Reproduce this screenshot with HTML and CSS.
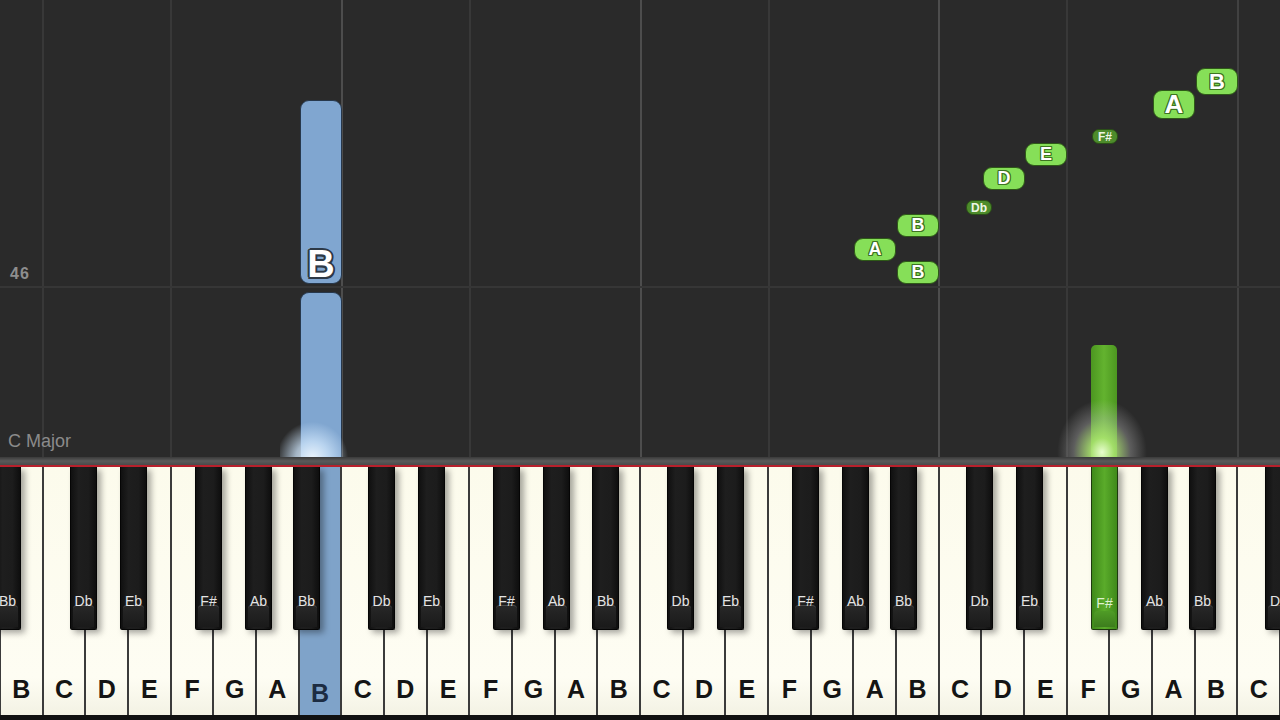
FILE: index.html
```html
<!DOCTYPE html>
<html>
<head>
<meta charset="utf-8">
<link rel="stylesheet" href="styles.css">
</head>
<body>
<div class="app">
  <div class="roll">
    <div class="vline dim" style="left:42px"></div>
    <div class="vline dim" style="left:170px"></div>
    <div class="vline bright" style="left:341px"></div>
    <div class="vline dim" style="left:469px"></div>
    <div class="vline bright" style="left:640px"></div>
    <div class="vline dim" style="left:768px"></div>
    <div class="vline bright" style="left:938px"></div>
    <div class="vline dim" style="left:1066px"></div>
    <div class="vline mid" style="left:1237px"></div>
    <div class="hline" style="top:286px"></div>
    <div class="measure" style="top:265px">46</div>
    <div class="key-name">C Major</div>

    <div class="blue-note top-part" style="top:100px;height:184px">
      <span class="blue-label">B</span>
    </div>
    <div class="blue-note low-part" style="top:292px;height:165px"></div>
    <div class="glow blue-glow"></div>

    <div class="green-note" style="top:345px;height:112px"></div>
    <div class="glow green-glow"></div>

    <div class="tag" style="left:854px;top:238px">A</div>
    <div class="tag" style="left:897px;top:214px">B</div>
    <div class="tag" style="left:897px;top:261px">B</div>
    <div class="tag small" style="left:966px;top:200px">Db</div>
    <div class="tag" style="left:983px;top:167px">D</div>
    <div class="tag" style="left:1025px;top:143px">E</div>
    <div class="tag small" style="left:1092px;top:129px">F#</div>
    <div class="tag big" style="left:1153px;top:90px">A</div>
    <div class="tag top" style="left:1196px;top:68px">B</div>
  </div>
  <div class="bar"></div>
  <div class="redline"></div>
  <div class="keyboard">
    <div class="whites">
      <div class="white"><span>B</span></div>
      <div class="white"><span>C</span></div>
      <div class="white"><span>D</span></div>
      <div class="white"><span>E</span></div>
      <div class="white"><span>F</span></div>
      <div class="white"><span>G</span></div>
      <div class="white"><span>A</span></div>
      <div class="white blue"><span>B</span></div>
      <div class="white"><span>C</span></div>
      <div class="white"><span>D</span></div>
      <div class="white"><span>E</span></div>
      <div class="white"><span>F</span></div>
      <div class="white"><span>G</span></div>
      <div class="white"><span>A</span></div>
      <div class="white"><span>B</span></div>
      <div class="white"><span>C</span></div>
      <div class="white"><span>D</span></div>
      <div class="white"><span>E</span></div>
      <div class="white"><span>F</span></div>
      <div class="white"><span>G</span></div>
      <div class="white"><span>A</span></div>
      <div class="white"><span>B</span></div>
      <div class="white"><span>C</span></div>
      <div class="white"><span>D</span></div>
      <div class="white"><span>E</span></div>
      <div class="white"><span>F</span></div>
      <div class="white"><span>G</span></div>
      <div class="white"><span>A</span></div>
      <div class="white"><span>B</span></div>
      <div class="white"><span>C</span></div>
    </div>
    <div class="black" style="left:-6px"><span>Bb</span></div>
    <div class="black" style="left:70px"><span>Db</span></div>
    <div class="black" style="left:120px"><span>Eb</span></div>
    <div class="black" style="left:195px"><span>F#</span></div>
    <div class="black" style="left:245px"><span>Ab</span></div>
    <div class="black" style="left:293px"><span>Bb</span></div>
    <div class="black" style="left:368px"><span>Db</span></div>
    <div class="black" style="left:418px"><span>Eb</span></div>
    <div class="black" style="left:493px"><span>F#</span></div>
    <div class="black" style="left:543px"><span>Ab</span></div>
    <div class="black" style="left:592px"><span>Bb</span></div>
    <div class="black" style="left:667px"><span>Db</span></div>
    <div class="black" style="left:717px"><span>Eb</span></div>
    <div class="black" style="left:792px"><span>F#</span></div>
    <div class="black" style="left:842px"><span>Ab</span></div>
    <div class="black" style="left:890px"><span>Bb</span></div>
    <div class="black" style="left:966px"><span>Db</span></div>
    <div class="black" style="left:1016px"><span>Eb</span></div>
    <div class="black green" style="left:1091px"><span>F#</span></div>
    <div class="black" style="left:1141px"><span>Ab</span></div>
    <div class="black" style="left:1189px"><span>Bb</span></div>
    <div class="black edge" style="left:1265px"><span>Db</span></div>
  </div>
  <div class="bottom"></div>
</div>
</body>
</html>
```

FILE: styles.css
```css
* { box-sizing: border-box; }
html, body {
  margin: 0;
  padding: 0;
  background: #2b2b2b;
  font-family: "Liberation Sans", Arial, sans-serif;
}
.app {
  width: 1280px;
  height: 720px;
  overflow: hidden;
  display: flex;
  flex-direction: column;
}
.roll {
  position: relative;
  height: 457px;
  flex: none;
  background: #2a2a2a;
  overflow: hidden;
}
.vline {
  position: absolute;
  top: 0;
  bottom: 0;
  width: 2px;
}
.vline.dim { background: #383838; }
.vline.mid { background: #414141; }
.vline.bright { background: #4d4d4d; }
.hline {
  position: absolute;
  left: 0;
  right: 0;
  height: 2px;
  background: #363636;
}
.measure {
  position: absolute;
  left: 10px;
  font-size: 16px;
  font-weight: bold;
  color: #8e8e8e;
  letter-spacing: 1px;
}
.key-name {
  position: absolute;
  left: 8px;
  top: 431px;
  font-size: 18px;
  color: #8b8b8b;
}
.blue-note {
  position: absolute;
  left: 300px;
  width: 42px;
  background: #80a6d0;
  border: 1px solid #27384c;
  display: flex;
  align-items: flex-end;
  justify-content: center;
}
.blue-note.top-part { border-radius: 9px; }
.blue-note.low-part { border-radius: 9px 9px 0 0; border-bottom: none; }
.blue-label {
  font-size: 38px;
  font-weight: bold;
  color: #ffffff;
  line-height: 36px;
  margin-bottom: 1px;
  text-shadow: 2px 0 #2d3946, -2px 0 #2d3946, 0 2px #2d3946, 0 -2px #2d3946,
    1.5px 1.5px #2d3946, -1.5px 1.5px #2d3946, 1.5px -1.5px #2d3946, -1.5px -1.5px #2d3946;
}
.green-note {
  position: absolute;
  left: 1091px;
  width: 26px;
  border-radius: 5px 5px 0 0;
  background: linear-gradient(90deg, #4c9620, #63b32f 50%, #4c9620);
}
.glow {
  position: absolute;
  pointer-events: none;
}
.blue-glow {
  left: 280px;
  top: 418px;
  width: 72px;
  height: 46px;
  background: radial-gradient(ellipse at 45% 88%, rgba(240,248,255,0.95) 0%, rgba(205,228,250,0.75) 30%, rgba(160,200,240,0.0) 64%);
}
.green-glow {
  left: 1054px;
  top: 396px;
  width: 96px;
  height: 74px;
  background: radial-gradient(ellipse at 50% 76%, rgba(235,255,210,0.98) 0%, rgba(175,232,115,0.85) 18%, rgba(210,210,210,0.3) 42%, rgba(120,120,120,0) 66%);
}
.tag {
  position: absolute;
  width: 42px;
  height: 23px;
  border-radius: 9px;
  background: #86df58;
  border: 1px solid #2e5a17;
  display: flex;
  align-items: center;
  justify-content: center;
  font-size: 18px;
  font-weight: bold;
  color: #ffffff;
  text-shadow: 1px 0 #3d7421, -1px 0 #3d7421, 0 1px #3d7421, 0 -1px #3d7421,
    1px 1px #3d7421, -1px 1px #3d7421, 1px -1px #3d7421, -1px -1px #3d7421;
}
.tag.big {
  height: 29px;
  font-size: 26px;
}
.tag.top {
  height: 27px;
  font-size: 22px;
}
.tag.small {
  width: 26px;
  height: 15px;
  border-radius: 7px;
  background: #4d8c2b;
  border-color: #2a4f17;
  font-size: 12px;
  text-shadow: none;
  color: #eef6e6;
}
.bar {
  height: 8px;
  flex: none;
  background: linear-gradient(#3a3a3a, #5a5a5a 50%, #4a4a4a);
}
.redline {
  height: 2px;
  flex: none;
  background: #b8202c;
}
.keyboard {
  position: relative;
  height: 248px;
  flex: none;
  background: #222;
  overflow: hidden;
}
.whites {
  display: flex;
  height: 100%;
}
.white {
  flex: 1;
  background: linear-gradient(#fcfbec, #fefdf3 85%, #f3f2e4);
  border-left: 1px solid #3b3b3b;
  border-right: 1px solid #3b3b3b;
  display: flex;
  align-items: flex-end;
  justify-content: center;
  padding-bottom: 11px;
}
.white span {
  font-size: 25px;
  font-weight: bold;
  color: #141414;
}
.white.blue {
  background: #7fa3c9;
}
.white.blue span {
  color: #1c2c42;
  margin-bottom: -4px;
}
.black {
  position: absolute;
  top: 0;
  width: 27px;
  height: 163px;
  background: linear-gradient(90deg, #101010, #1e1e1e 30%, #1c1c1c 70%, #0e0e0e);
  border: 1px solid #050505;
  border-top: none;
  border-radius: 0 0 2px 2px;
  box-shadow: 4px 3px 6px rgba(0,0,0,0.35);
  display: flex;
  align-items: flex-end;
  justify-content: center;
  padding-bottom: 20px;
}
.black.edge {
  justify-content: flex-start;
  padding-left: 4px;
}
.black::after {
  content: "";
  position: absolute;
  left: 2px;
  right: 2px;
  bottom: 2px;
  height: 21px;
  border-top: 1px solid #4a4a4a;
  border-radius: 4px 4px 0 0;
  background: linear-gradient(#272727, #1a1a1a);
}
.black span {
  font-size: 14px;
  color: #e4e4e4;
  position: relative;
  z-index: 1;
}
.black.green {
  background: linear-gradient(90deg, #3f8a1a, #5aab2a 50%, #3f8a1a);
  border-color: #1e3a0f;
  padding-bottom: 18px;
}
.black.green::after {
  border-top: none;
  background: linear-gradient(#4f9c26, #3d7d1d);
  height: 16px;
}
.black.green span { color: #dff2d0; }
.bottom {
  flex: 1;
  background: #111;
}
```
